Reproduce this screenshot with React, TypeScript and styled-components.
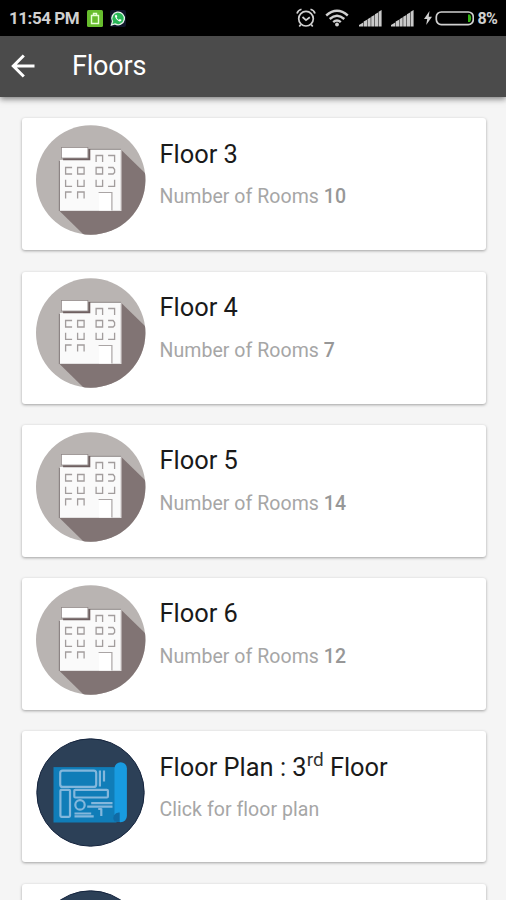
import React from "react";
import styled, { createGlobalStyle } from "styled-components";

const GlobalStyle = createGlobalStyle`
  * {
    box-sizing: border-box;
  }

  body {
    margin: 0;
    background-color: #f5f5f5;
    font-family: Roboto, "Liberation Sans", sans-serif;
    overflow: hidden;
  }
`;

const Screen = styled.div`
  width: 100%;
  height: 900px;

  display: flex;
  flex-direction: column;

  overflow: hidden;
`;

const StatusBar = styled.div`
  height: 36px;
  flex-shrink: 0;

  padding: 0 9px;

  display: flex;
  align-items: center;
  justify-content: space-between;

  background-color: #000;
  color: #d0d0d0;
`;

const StatusGroup = styled.div<{ $gap: number }>`
  display: flex;
  align-items: center;
  gap: ${(props) => props.$gap}px;
`;

const Clock = styled.span`
  width: 71px;

  font-size: 17px;
  font-weight: 700;
  letter-spacing: -0.45px;
  white-space: nowrap;
`;

const Percent = styled.span`
  font-size: 16px;
  font-weight: 700;
  letter-spacing: -0.8px;
`;

const AppBar = styled.header`
  height: 61px;
  flex-shrink: 0;

  padding: 0 0 1px 11px;

  display: flex;
  align-items: center;
  gap: 37px;

  background-color: #4b4b4b;
  box-shadow: 0 2px 6px rgba(0, 0, 0, 0.5);
  z-index: 1;
`;

const BackButton = styled.button`
  padding: 0;

  display: flex;

  background: none;
  border: none;
`;

const Title = styled.h1`
  margin: 0;

  color: #fff;
  font-size: 27px;
  font-weight: 400;
  letter-spacing: -0.2px;
`;

const List = styled.main`
  padding: 21.4px 20px 0 22px;

  display: flex;
  flex-direction: column;
  gap: 21.25px;
`;

const Card = styled.article<{ $height: number }>`
  height: ${(props) => props.$height}px;
  flex-shrink: 0;

  padding: 6.8px 13.5px;

  display: flex;
  align-items: flex-start;
  gap: 14px;

  background-color: #fff;
  border-radius: 3px;
  box-shadow: 0 1px 3px rgba(0, 0, 0, 0.35);
`;

const Info = styled.div`
  padding-top: 13.4px;

  display: flex;
  flex-direction: column;
  gap: 16.7px;
`;

const Name = styled.h2`
  margin: 0;

  color: #1a1a1a;
  font-size: 25.4px;
  font-weight: 400;
  line-height: 30px;
  white-space: nowrap;

  sup {
    color: #333;
    font-size: 19px;
    line-height: 0;
    vertical-align: 10px;
  }
`;

const Detail = styled.p`
  margin: 0;

  color: #a6a6a6;
  font-size: 19.5px;
  line-height: 24px;
  letter-spacing: 0.05px;
  white-space: nowrap;

  b {
    color: #979797;
    font-weight: 500;
  }
`;

const BatteryAppIcon = () => (
  <svg width="16" height="17" viewBox="0 0 16 17">
    <rect width="16" height="17" rx="1.5" fill="#67bd2d" />
    <path d="M4.5 5.5h7v8h-7zM6.5 5V3.5h3V5" fill="none" stroke="#e6ffd5" strokeWidth="1.4" />
  </svg>
);

const WhatsappIcon = () => (
  <svg width="16" height="17" viewBox="0 0 16 17">
    <rect width="16" height="17" rx="2" fill="#101329" />
    <path d="M1.5 15l1-3.6a6.3 6.3 0 1 1 2.4 2.5z" fill="#29b657" stroke="#e5f5ea" strokeWidth="1.3" />
    <path
      d="M5.7 4.8c-1 .8-.9 2 .3 3.7 1.5 2.1 3.2 3.2 4.5 2.8.8-.3 1-1 .9-1.5l-1.7-.8-.8.9c-1-.4-1.8-1.2-2.3-2.3l.7-.8-.7-1.8z"
      fill="#fff"
    />
  </svg>
);

const AlarmIcon = () => (
  <svg width="20" height="20" viewBox="0 0 20 20" fill="none" stroke="#d0d0d0" strokeWidth="1.7">
    <circle cx="10" cy="10.7" r="7.3" />
    <path d="M6.5 9l3.5 3.2L13.8 9.3M1 5.5Q2 2.2 5.5 1.3M19 5.5Q18 2.2 14.5 1.3M4.8 16.5l-1.5 2M15.2 16.5l1.5 2" />
  </svg>
);

const WifiIcon = () => (
  <svg width="24" height="18" viewBox="0 0 24 18" fill="none" stroke="#d0d0d0" strokeWidth="2.4">
    <path d="M1.2 6.5Q12-3 22.8 6.5M4.7 10Q12 3.6 19.3 10M8.2 13.2Q12 9.8 15.8 13.2" />
    <circle cx="12" cy="15.5" r="1.9" fill="#d0d0d0" stroke="none" />
  </svg>
);

const SignalIcon = () => (
  <svg width="23" height="17" viewBox="0 0 23 17" fill="#c9c9c9">
    <path d="M0 16.5V15l4.2-2.5v4zM4.7 16.5v-5L8 9.7v6.8zM8.5 16.5V9.2l3.2-1.9v9.2zM12.2 16.5V6.7l3.2-1.8v11.6zM15.9 16.5V4.2l3.2-1.8v14.1zM19.6 16.5V1.8l3-1.8v16.5z" />
  </svg>
);

const BatteryIcon = () => (
  <svg width="50" height="16" viewBox="0 0 50 16">
    <path d="M5.5 1L0 9h3.2L2.2 15 8 6.8H4.7z" fill="#d0d0d0" />
    <rect x="12.3" y="2" width="37" height="12.6" rx="5" fill="none" stroke="#d0d0d0" strokeWidth="1.7" />
    <path d="M46 4.5q2.4 3.8 0 7.6h-2V4.5z" fill="#35b515" />
  </svg>
);

const ArrowIcon = () => (
  <svg width="24" height="24" viewBox="0 0 24 24" fill="none" stroke="#fff" strokeWidth="3">
    <path d="M12.8 1.5L2.3 12l10.5 10.5M2.3 12H23.5" />
  </svg>
);

// open paths, each one a partly lit window frame
const windows = [
  [61, 37, "M0 0V-6.5H6.5V0"],
  [73, 30.5, "M0 0H6.5V6.5"],
  [30.5, 42.5, "M6.5 0H0V6.5H6.5"],
  [42.5, 42.5, "M0 0H6.5V6.5H0Z"],
  [61, 42.5, "M0 0H6.5V6.5H0Z"],
  [73, 42.5, "M0 0H5L6.5 2V5L5 6.5H0"],
  [30.5, 54.8, "M0 0V6.5H6.5"],
  [42.5, 54.8, "M0 0V6.5H6.5V0"],
  [61, 54.8, "M0 0V6.5H6.5V0"],
  [73, 54.8, "M6.5 0V6.5H0"],
  [30.5, 67, "M0 6.5V0H6"],
  [42.5, 67, "M0 6.5V0H6.5V6.5"],
] as const;

const BuildingIcon = () => (
  <svg width="110" height="110" viewBox="0.9 0 110 110">
    <defs>
      <clipPath id="disc">
        <circle cx="55.6" cy="55" r="54.7" />
      </clipPath>
    </defs>
    <g clipPath="url(#disc)">
      <rect width="112" height="112" fill="#b9b4b2" />
      <path d="M86 24.8L112 50V112H51L24.2 85.8z" fill="#817474" />
    </g>
    <path d="M24.2 35H54V24.8H86.2V86H24.2z" fill="#fafafa" />
    <path d="M85.5 25.5V85.5H25" fill="none" stroke="#e3e1e1" strokeWidth="1.2" />
    <path d="M24.3 35.5V86" stroke="#8c8484" strokeWidth="1.2" />
    <path d="M54 24.3H86" stroke="#8c8484" strokeWidth="0.8" />
    <path d="M28 34.2H54.2V24" fill="none" stroke="#6e5f60" strokeWidth="2" />
    <rect x="26.3" y="22.6" width="26.5" height="10.4" fill="#fff" stroke="#8c8484" strokeWidth="0.7" />
    {windows.map(([x, y, d]) => (
      <path
        key={`${x}-${y}`}
        d={d}
        transform={`translate(${x} ${y})`}
        fill="none"
        stroke="#a29d9d"
        strokeWidth="1.3"
      />
    ))}
    <path d="M64 85.5V67.5H76.8V85.5" fill="#fff" />
    <path d="M63.5 67.5H76.8V85.5" fill="none" stroke="#aaa5a5" strokeWidth="1.2" />
  </svg>
);

const BlueprintIcon = () => (
  <svg width="110" height="110" viewBox="0.3 0 110 110">
    <circle cx="54.8" cy="54.5" r="53.7" fill="#2c4057" stroke="#14233d" />
    <rect x="17.8" y="29.1" width="63" height="55.4" fill="#107db8" />
    <path d="M78.8 83V30.5a6.2 6.2 0 0 1 12.4 0V78a6.2 6.2 0 0 1-6.2 6.2z" fill="#189be0" />
    <path d="M79 83.5a5.5 5.5 0 0 1 5-9v9.5z" fill="#106ba5" />
    <g fill="none" stroke="#83b7dc" strokeWidth="2.2">
      <rect x="24.5" y="32.7" width="36" height="16.2" rx="2.5" />
      <rect x="24.7" y="51.8" width="9.6" height="27" rx="1" />
      <rect x="38.6" y="51.8" width="33.6" height="7.7" rx="1" />
      <circle cx="44.3" cy="66.9" r="4.7" />
      <path d="M64.2 32.5V48.5M68.3 32.5V43.5M55.5 65.2H76.8M51.5 68.6H76.8M38.8 75.5H55.5M38.8 78.3H58M65.6 70.5V78M62.5 71H66" />
    </g>
  </svg>
);

interface FloorCardProps {
  icon: React.ReactNode;
  name?: React.ReactNode;
  height?: number;
  children?: React.ReactNode;
}

const FloorCard = ({ icon, name, height = 132, children }: FloorCardProps) => {
  return (
    <Card $height={height}>
      {icon}
      {name && (
        <Info>
          <Name>{name}</Name>
          <Detail>{children}</Detail>
        </Info>
      )}
    </Card>
  );
};

const floors = [
  { floor: 3, rooms: 10 },
  { floor: 4, rooms: 7 },
  { floor: 5, rooms: 14 },
  { floor: 6, rooms: 12 },
];

const App = () => {
  return (
    <Screen>
      <GlobalStyle />
      <StatusBar>
        <StatusGroup $gap={7}>
          <Clock>11:54 PM</Clock>
          <BatteryAppIcon />
          <WhatsappIcon />
        </StatusGroup>
        <StatusGroup $gap={9.5}>
          <AlarmIcon />
          <WifiIcon />
          <SignalIcon />
          <SignalIcon />
          <StatusGroup $gap={4}>
            <BatteryIcon />
            <Percent>8%</Percent>
          </StatusGroup>
        </StatusGroup>
      </StatusBar>
      <AppBar>
        <BackButton aria-label="Back">
          <ArrowIcon />
        </BackButton>
        <Title>Floors</Title>
      </AppBar>
      <List>
        {floors.map(({ floor, rooms }) => (
          <FloorCard key={floor} icon={<BuildingIcon />} name={`Floor ${floor}`}>
            Number of Rooms <b>{rooms}</b>
          </FloorCard>
        ))}
        <FloorCard
          icon={<BlueprintIcon />}
          height={131}
          name={
            <>
              Floor Plan : 3<sup>rd</sup> Floor
            </>
          }
        >
          Click for floor plan
        </FloorCard>
        <FloorCard icon={<BlueprintIcon />} height={131} />
      </List>
    </Screen>
  );
};

export default App;
